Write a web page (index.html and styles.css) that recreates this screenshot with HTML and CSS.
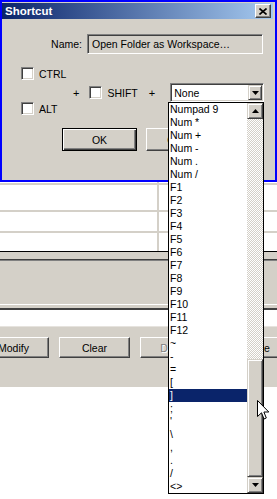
FILE: index.html
```html
<!DOCTYPE html>
<html lang="en">
<head>
    <meta charset="UTF-8">
    <meta name="viewport" content="width=device-width, initial-scale=1.0">
    <title>Shortcut</title>
    <link rel="stylesheet" href="styles.css">
</head>
<body>
    <div class="app">
        <div class="table">
            <div class="row row-a"><div class="cell first"></div><div class="cell"></div></div>
            <div class="row row-b"><div class="cell first"></div><div class="cell"></div></div>
            <div class="row row-c"><div class="cell first"></div><div class="cell"></div></div>
            <div class="row row-d"><div class="cell first"></div><div class="cell"></div></div>
        </div>
        <div class="gap-top"></div>
        <div class="panel"></div>
        <div class="gap-mid"></div>
        <div class="entry"></div>
        <div class="toolbar">
            <button class="btn">Modify</button>
            <button class="btn">Clear</button>
            <button class="btn" disabled>Delete</button>
            <button class="btn">Close</button>
        </div>
    </div>

    <div class="dialog">
        <div class="titlebar">
            <span class="title">Shortcut</span>
            <span class="close">
                <svg width="8" height="7" viewBox="0 0 8 7"><path d="M0.5 0.5 L7.5 6.5 M7.5 0.5 L0.5 6.5" stroke="#000" stroke-width="1.6"/></svg>
            </span>
        </div>
        <div class="name-row">
            <label class="name-label">Name:</label>
            <div class="field readonly">Open Folder as Workspace…</div>
        </div>
        <div class="check-row">
            <span class="check"></span><span class="check-label">CTRL</span>
        </div>
        <div class="key-row">
            <span class="plus">+</span>
            <span class="check shift"></span><span class="check-label">SHIFT</span>
            <span class="plus plus-2">+</span>
            <div class="field combo">
                <span>None</span>
                <span class="combo-btn">
                    <svg width="7" height="4" viewBox="0 0 7 4"><path d="M0 0 H7 L3.5 4 Z" fill="#000"/></svg>
                </span>
            </div>
        </div>
        <div class="check-row alt">
            <span class="check"></span><span class="check-label">ALT</span>
        </div>
        <div class="dialog-buttons">
            <button class="btn btn-default">OK</button>
            <button class="btn btn-cancel">Cancel</button>
        </div>
    </div>

    <div class="droplist">
        <div class="items">
            <div class="item">Numpad 9</div>
            <div class="item">Num *</div>
            <div class="item">Num +</div>
            <div class="item">Num -</div>
            <div class="item">Num .</div>
            <div class="item">Num /</div>
            <div class="item">F1</div>
            <div class="item">F2</div>
            <div class="item">F3</div>
            <div class="item">F4</div>
            <div class="item">F5</div>
            <div class="item">F6</div>
            <div class="item">F7</div>
            <div class="item">F8</div>
            <div class="item">F9</div>
            <div class="item">F10</div>
            <div class="item">F11</div>
            <div class="item">F12</div>
            <div class="item">~</div>
            <div class="item">-</div>
            <div class="item">=</div>
            <div class="item">[</div>
            <div class="item selected">]</div>
            <div class="item">;</div>
            <div class="item">'</div>
            <div class="item">\</div>
            <div class="item">,</div>
            <div class="item">.</div>
            <div class="item">/</div>
            <div class="item">&lt;&gt;</div>
        </div>
        <div class="scrollbar">
            <span class="sb-btn">
                <svg width="7" height="4" viewBox="0 0 7 4"><path d="M0 4 H7 L3.5 0 Z" fill="#000"/></svg>
            </span>
            <span class="sb-track"></span>
            <span class="sb-thumb"></span>
            <span class="sb-btn">
                <svg width="7" height="4" viewBox="0 0 7 4"><path d="M0 0 H7 L3.5 4 Z" fill="#000"/></svg>
            </span>
        </div>
    </div>

    <svg class="cursor" width="13" height="21" viewBox="0 0 13 21">
        <path d="M0.5 0.5 L0.5 16.5 L4.5 12.8 L7 19 L9.3 18 L6.9 12 L11.8 12 Z" fill="#fff" stroke="#000" stroke-width="1" stroke-linejoin="miter"/>
    </svg>
</body>
</html>
```

FILE: styles.css
```css
body {
    margin: 0;
    width: 277px;
    height: 499px;
    overflow: hidden;
    position: relative;
    background: #fff;
    font-family: "Liberation Sans", Arial, sans-serif;
    font-size: 10.5px;
    color: #000;
}
.app {
    width: 277px;
}
.table {
    background: #fff;
    border-bottom: 1px solid #000;
}
.row {
    display: flex;
    border-bottom: 2px solid #d4d0c8;
}
.row-a { height: 183px; }
.row-b { height: 25px; }
.row-c { height: 19px; }
.row-d { height: 18px; border-bottom: none; }
.cell {
    flex: 1;
}
.cell.first {
    flex: 0 0 157px;
    border-right: 2px solid #d4d0c8;
}
.gap-top {
    height: 7px;
    background: #d4d0c8;
}
.panel {
    height: 44px;
    background: #d4d0c8;
    border-top: 1px solid #404040;
    border-bottom: 1px solid #fff;
    box-shadow: inset 0 1px #808080;
}
.gap-mid {
    height: 3px;
    background: #d4d0c8;
}
.entry {
    height: 16px;
    background: #fff;
    border-top: 2px solid #404040;
    border-bottom: 1px solid #e6e3de;
}
.toolbar {
    display: flex;
    gap: 10px;
    margin-left: -22px;
    padding: 10px 0 29px;
    background: #d4d0c8;
    overflow: hidden;
}
.toolbar .btn {
    flex: 0 0 71px;
    height: 21px;
}
.btn {
    box-sizing: border-box;
    background: #d4d0c8;
    border: 1px solid;
    border-color: #fff #404040 #404040 #fff;
    box-shadow: inset -1px -1px #808080;
    font-family: inherit;
    font-size: 10.5px;
    color: #000;
    padding: 0;
}
.btn:disabled {
    color: #808080;
    text-shadow: 1px 1px #fff;
}

/* dialog */
.dialog {
    position: absolute;
    top: 0;
    left: 0;
    width: 277px;
    height: 182px;
    box-sizing: border-box;
    border: 2px solid #0000ff;
    padding: 1px 2px 0 0;
    background: #d4d0c8;
}
.titlebar {
    height: 16px;
    display: flex;
    align-items: center;
    justify-content: space-between;
    padding: 0 2px 0 3px;
    background: linear-gradient(to right, #0a246a, #a6caf0);
}
.title {
    color: #fff;
    font-weight: bold;
    font-size: 11.5px;
}
.close {
    box-sizing: border-box;
    width: 16px;
    height: 14px;
    display: flex;
    align-items: center;
    justify-content: center;
    background: #d4d0c8;
    border: 1px solid;
    border-color: #fff #404040 #404040 #fff;
    box-shadow: inset -1px -1px #808080;
}
.name-row {
    display: flex;
    align-items: center;
    margin-top: 15px;
}
.name-label {
    width: 80px;
    text-align: right;
    margin-right: 5px;
}
.field {
    box-sizing: border-box;
    border: 1px solid;
    border-color: #808080 #fff #fff #808080;
    box-shadow: inset 1px 1px #404040, inset -1px -1px #d4d0c8;
}
.readonly {
    width: 176px;
    height: 20px;
    line-height: 18px;
    padding-left: 4px;
    background: #d4d0c8;
}
.check-row {
    display: flex;
    align-items: center;
    height: 13px;
    margin-top: 13px;
    padding-left: 19px;
}
.check-row.alt {
    margin-top: 0;
}
.check {
    box-sizing: border-box;
    width: 13px;
    height: 13px;
    background: #fff;
    border: 1px solid;
    border-color: #808080 #fff #fff #808080;
    box-shadow: inset 1px 1px #404040, inset -1px -1px #d4d0c8;
}
.check-label {
    margin-left: 5px;
}
.key-row {
    display: flex;
    align-items: center;
    height: 19px;
    margin-top: 3px;
    padding-left: 71px;
}
.plus {
    font-size: 11px;
}
.check.shift {
    margin-left: 10px;
}
.plus-2 {
    margin-left: 11px;
}
.combo {
    display: flex;
    align-items: center;
    justify-content: space-between;
    width: 94px;
    height: 19px;
    margin-left: 15px;
    padding: 2px 1px 2px 3px;
    background: #fff;
}
.combo-btn {
    box-sizing: border-box;
    width: 14px;
    height: 15px;
    display: flex;
    align-items: center;
    justify-content: center;
    background: #d4d0c8;
    border: 1px solid;
    border-color: #d4d0c8 #404040 #404040 #d4d0c8;
    box-shadow: inset 1px 1px #fff, inset -1px -1px #808080;
}
.dialog-buttons {
    display: flex;
    margin-top: 13px;
    padding-left: 60px;
}
.dialog-buttons .btn {
    width: 75px;
    height: 23px;
}
.btn-default {
    border: 1px solid #000;
    box-shadow: inset 1px 1px #fff, inset -1px -1px #404040, inset -2px -2px #808080;
}
.btn-cancel {
    margin-left: 9px;
}

/* dropdown list */
.droplist {
    position: absolute;
    top: 102px;
    left: 168px;
    width: 96px;
    height: 392px;
    box-sizing: border-box;
    border: 1px solid #000;
    background: #fff;
    display: flex;
}
.items {
    flex: 1;
}
.item {
    height: 13px;
    line-height: 13px;
    padding-left: 1px;
    white-space: nowrap;
}
.item.selected {
    background: #0a246a;
    color: #fff;
}
.scrollbar {
    width: 16px;
    display: flex;
    flex-direction: column;
}
.sb-btn,
.sb-thumb {
    box-sizing: border-box;
    display: flex;
    align-items: center;
    justify-content: center;
    background: #d4d0c8;
    border: 1px solid;
    border-color: #d4d0c8 #404040 #404040 #d4d0c8;
    box-shadow: inset 1px 1px #fff, inset -1px -1px #808080;
}
.sb-btn {
    height: 16px;
}
.sb-track {
    height: 240px;
    background: repeating-conic-gradient(#d4d0c8 0 25%, #fff 0 50%) 0 0 / 2px 2px;
}
.sb-thumb {
    height: 118px;
}
.cursor {
    position: absolute;
    left: 257px;
    top: 400px;
}
```
